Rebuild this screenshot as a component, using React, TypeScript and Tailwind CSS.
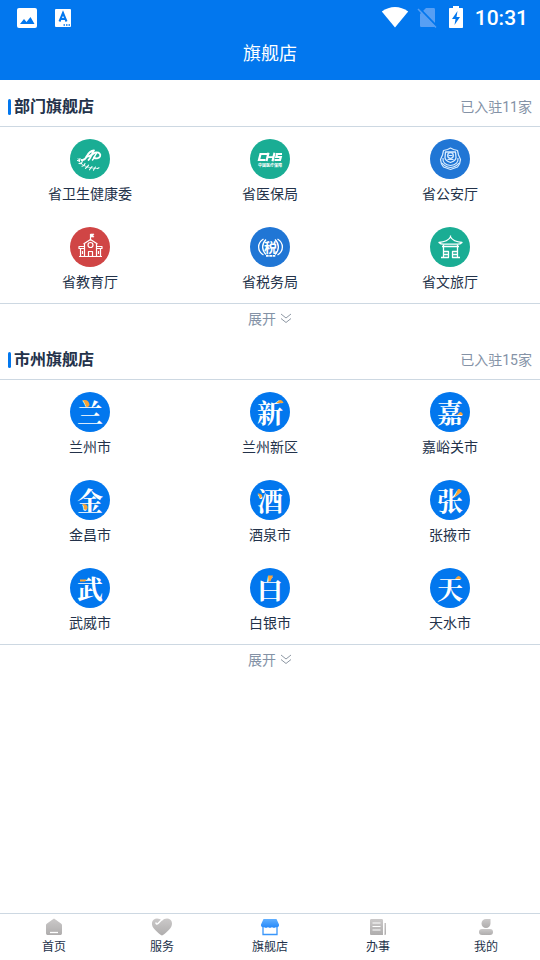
import { ReactNode } from "react";

type Department = { name: string; color: string; emblem: ReactNode };
type City = { name: string; glyph: string; accent: string };

const HealthEmblem = () => (
  <svg viewBox="0 0 40 40" className="size-10" fill="none" stroke="#fff" strokeLinecap="round" strokeLinejoin="round">
    <path d="M11.500 21c3 .5 4-1 5.500-4s3-5 7-5.500c-2 2.500-3 7.500-5.500 9.500" strokeWidth="1.800" />
    <path d="M16.500 17.500c5 .5 5.500-3.500 9.500-4 3.500-.3 5 2 4 4-1.200 2.200-4.500 2.500-6 1" strokeWidth="1.800" />
    <path d="M26.500 14.500c-1.800 1.500-2 4.500-4 6.500" strokeWidth="1.500" />
    <path d="M8 19.500c1.500 5.500 7 9.500 19.500 10" strokeWidth="0.700" />
    <path
      d="M7.500 21.500l2 .8M9 24.500l2.300.2M12 27.200l2-.7M15.500 29.300l1.500-1.200M19.500 30.800l1-1.500M23.500 31.300l.7-1.500M10 19.500l-.5 2M12.300 22.200l-.8 2M15 24.500l-1 1.800M18.500 26.200l-1.200 1.600M22 27.500l-1.200 1.500M25.500 28l-1.200 1.500M29 28.800l-1.500.8"
      strokeWidth="1.100"
    />
  </svg>
);

const InsuranceEmblem = () => (
  <svg viewBox="0 0 40 40" className="size-10" fill="none" stroke="#fff">
    <path d="M16.500 15h-6l-1.500 6h6.500" strokeWidth="2.200" />
    <path d="M18.500 13.800L16.500 22M24.500 13.800l-2 8.400" strokeWidth="2.200" />
    <path d="M15 15h3M18 18.200h5" strokeWidth="1.800" />
    <path d="M32 15h-5l-.7 3h4.500l-.8 3h-5.500" strokeWidth="2.200" />
    <text x="20" y="27.500" textAnchor="middle" fontSize="4" fontWeight="700" fill="#fff" stroke="none">
      中国医疗保障
    </text>
  </svg>
);

const PoliceEmblem = () => (
  <svg viewBox="0 0 40 40" className="size-10" fill="none" stroke="#d8ecff" strokeLinejoin="round">
    <path d="M20.500 9l3 1.500 4 1 1 4.500 2 4.500-1 4.500-2 3-7 2.500-7-2.500-2-3-1-4.500 2-4.500 1-4.500 4-1z" strokeWidth="1.200" />
    <path d="M15.500 13h10l.5 5.500c0 2.500-2.500 4-5.500 5-3-1-5.500-2.500-5.500-5z" strokeWidth="1.300" />
    <circle cx="20.500" cy="16.500" r="2.800" strokeWidth="1.300" />
    <path d="M18.500 16.500h4M17.500 20.500h6M13 19c-.5 4 2 7 7.500 7.500 5.500-.5 8-3.500 7.500-7.500M12 24c2 3 4 4 8.500 4.500 4.500-.5 6.500-1.500 8.500-4.500" strokeWidth="1.200" />
  </svg>
);

const SchoolEmblem = () => (
  <svg viewBox="0 0 40 40" className="size-10" fill="none" stroke="#fff" strokeWidth="1.200" strokeLinejoin="round">
    <path d="M20.500 13.500V7" />
    <path d="M20.500 7h3.500l-1 1.500 1 1.500h-3.500z" fill="#fff" strokeWidth="0.600" />
    <path d="M13.500 17l7-4.500 7 4.500M14.500 17v12.500M26.500 17v12.500M14 19.500H9v2h5M27 19.500h5v2h-5M10.500 21.500v8M30.500 21.500v8M9 29.500h23" />
    <circle cx="20.500" cy="18" r="2.500" />
    <path d="M18.500 29.500v-5h4v5M12.500 24v3M28.500 24v3" />
  </svg>
);

const TaxEmblem = () => (
  <svg viewBox="0 0 40 40" className="size-10" fill="none" stroke="#fff">
    <path d="M13.500 12c-6.500 4-6.500 12 0 16M16 12.500c-4.500 4.500-4.500 10.500 0 15M27.500 12c6.500 4 6.500 12 0 16M25 12.500c4.500 4.500 4.500 10.500 0 15" strokeWidth="1.300" />
    <path d="M16 28.800h9.500" strokeWidth="1.800" strokeDasharray="2.700 .6" />
    <text x="20.500" y="24.500" textAnchor="middle" fontSize="13" fontWeight="700" fill="#fff" stroke="none">
      税
    </text>
  </svg>
);

const PavilionEmblem = () => (
  <svg viewBox="0 0 40 40" className="size-10" fill="none" stroke="#fff" strokeWidth="1.300" strokeLinejoin="round">
    <path d="M20.500 8.500v2M20.500 10c-2 3.500-6.500 5-11.500 5.500 1.500 1.500 3 1.700 4.500 1.700h14c1.500 0 3-.2 4.500-1.700-5-.5-9.500-2-11.500-5.500z" />
    <path d="M12 19.500h17M13.500 17.500v13M27.500 17.500v13M11 30.500h7.500v-6h-5M30 30.500h-7.500v-6h5M14 27.500h4.500M22.500 27.500h4.500" />
  </svg>
);

const departments: Department[] = [
  { name: "省卫生健康委", color: "bg-[#1aad94]", emblem: <HealthEmblem /> },
  { name: "省医保局", color: "bg-[#1aad94]", emblem: <InsuranceEmblem /> },
  { name: "省公安厅", color: "bg-[#2076d5]", emblem: <PoliceEmblem /> },
  { name: "省教育厅", color: "bg-[#d04545]", emblem: <SchoolEmblem /> },
  { name: "省税务局", color: "bg-[#2076d5]", emblem: <TaxEmblem /> },
  { name: "省文旅厅", color: "bg-[#1aad94]", emblem: <PavilionEmblem /> },
];

// accent is the orange brush stroke laid over each city's character
const cities: City[] = [
  { name: "兰州市", glyph: "兰", accent: "M12.500 8.500c4-1.500 6.500 1 7 4 0 1.500-1 2.500-2.500 2.500-2-.5-1-3.500-4.500-6.500z" },
  { name: "兰州新区", glyph: "新", accent: "M26 11l4-3c1.500 0 3 1 3.500 3z" },
  { name: "嘉峪关市", glyph: "嘉", accent: "M27 23l3-3c1.500 0 2.500 1 3 3z" },
  { name: "金昌市", glyph: "金", accent: "M12 24c3.500-.5 6 1 5.500 4-.5 2-2.500 2.500-3.500 1-.5-2 .5-2.500-2-5z" },
  { name: "酒泉市", glyph: "酒", accent: "M7.500 13.500c3 0 5 1 4.500 3-.5 1.500-2 2-2.500 1-.5-1.500 0-2.500-2-4z" },
  { name: "张掖市", glyph: "张", accent: "M24 18l4-9h1.500l2.500 2z" },
  { name: "武威市", glyph: "武", accent: "M10 11.500h6.500l-1.500 2h-5z" },
  { name: "白银市", glyph: "白", accent: "M18 7.500h5c-.5 2-2 3.500-2.500 6h-2z" },
  { name: "天水市", glyph: "天", accent: "M25 11l3-3c1.500 0 3 1 3.500 3z" },
];

const SectionHeader = ({ title, count }: { title: string; count: number }) => (
  <div className="flex items-center justify-between border-b border-[#cdd8e2] px-2 pt-[14px] pb-[6px]">
    <h2 className="flex items-center gap-[3px] text-base leading-[26px] font-bold">
      <span className="h-4 w-[3px] rounded-full bg-[#0277ee]" />
      {title}
    </h2>
    <span className="text-sm leading-[26px] text-[#8492a6]">已入驻{count}家</span>
  </div>
);

const Store = ({ name, children }: { name: string; children: ReactNode }) => (
  <a href="#" className="flex h-[88px] flex-col items-center gap-1 pt-3">
    {children}
    <span className="text-sm leading-[22px]">{name}</span>
  </a>
);

const ExpandButton = () => (
  <button className="flex h-[30px] w-full items-center justify-center gap-1 border-t border-[#cdd8e2] pt-px text-sm text-[#8492a6]">
    展开
    <svg viewBox="0 0 12 12" className="size-3" fill="none" stroke="#8e98a4">
      <path d="M1 1l5 4 5-4M1 5.500l5 4 5-4" />
    </svg>
  </button>
);

const HomeIcon = () => (
  <svg viewBox="0 0 20 20" className="size-5" fill="url(#tabGray)">
    <path d="M10 1.500l7 5c.7.500 1 1 1 2V16c0 1.500-.7 2-2 2H4c-1.300 0-2-.5-2-2V8.500c0-1 .3-1.500 1-2z" />
    <path d="M6 15.500h8" stroke="#fff" strokeWidth="1.300" />
  </svg>
);

const HeartIcon = () => (
  <svg viewBox="0 0 20 20" className="size-5 overflow-visible" fill="url(#tabGray)">
    <path d="M10 18.500c-1 0-6-4.500-8.500-7.500C-1.500 7 0 1.500 5 1.500c2 0 3.500.8 5 2.300 1.500-1.500 3-2.300 5-2.300 5 0 6.500 5.500 3.500 9.500-2.500 3-7.500 7.500-8.500 7.500z" />
    <path d="M10 2.500L6 6.500C5 7.500 4 7 4 6" stroke="#fff" strokeWidth="1.500" fill="none" strokeLinecap="round" />
  </svg>
);

const ShopIcon = () => (
  <svg viewBox="0 0 20 20" className="size-5">
    <path d="M3 9.500v8h14v-8" fill="#fff" stroke="#3996fb" strokeWidth="1.300" />
    <path d="M3.500 2h13l2.500 5.500c.5 2-1.500 3.500-3 2.500-1.300 1.300-3 1-4 0-1.300 1.300-3 1-4 0-1.300 1.300-3 1-4 0-1.500 1-3.500-.5-3-2.500z" fill="url(#tabBlue)" />
  </svg>
);

const NewsIcon = () => (
  <svg viewBox="0 0 20 20" className="size-5" fill="url(#tabGray)">
    <path d="M3.500 2H13.500c1 0 1.500.5 1.500 1.500V18h-11.500C2.500 18 2 17.500 2 16.500v-13C2 2.500 2.500 2 3.500 2zM16.500 6H18v10.500c0 1-.5 1.500-1.500 1.500z" />
    <path d="M4.500 6h8M4.500 9.500h8M4.500 13h8" stroke="#fff" strokeWidth="1.200" />
  </svg>
);

const UserIcon = () => (
  <svg viewBox="0 0 20 20" className="size-5" fill="url(#tabGray)">
    <path d="M10 2h4.500v4.500A4.500 4.500 0 1 1 10 2z" />
    <rect x="3" y="12" width="14" height="6" rx="3" />
  </svg>
);

const tabs = [
  { label: "首页", icon: <HomeIcon /> },
  { label: "服务", icon: <HeartIcon /> },
  { label: "旗舰店", icon: <ShopIcon /> },
  { label: "办事", icon: <NewsIcon /> },
  { label: "我的", icon: <UserIcon /> },
];

const StatusBar = () => (
  <div className="flex h-9 items-center justify-between pr-3 pl-4">
    <div className="flex items-center gap-4">
      <svg viewBox="0 0 22 22" className="size-[22px]">
        <rect x="1" y="1" width="20" height="20" rx="2" fill="#fff" />
        <path d="M4 17l4-5 2.500 3 4-5 4 7z" fill="#0277ee" />
      </svg>
      <svg viewBox="0 0 18 20" className="h-5 w-[18px]">
        <rect x="1" y="1" width="16" height="18" rx="1" fill="#fff" />
        <path d="M5.500 13.500L9 5l3.500 8.500M6.500 11h5" stroke="#0277ee" strokeWidth="2" fill="none" />
        <path d="M9.500 17H16" stroke="#0277ee" strokeWidth="1.500" strokeDasharray="1.500 1" />
      </svg>
    </div>
    <div className="flex items-center">
      <svg viewBox="0 0 28 24" className="h-6 w-7" fill="#fff">
        <path d="M14 21.500L.8 5.500c8-6 18.400-6 26.400 0z" />
      </svg>
      <svg viewBox="0 0 20 24" className="ml-2 h-6 w-5">
        <path d="M9 2h7.500c1 0 1.500.5 1.500 1.500v16c0 1-.5 1.500-1.500 1.500h-12C3.500 21 3 20.500 3 19.500V8z" fill="#579ff4" />
        <path d="M2 2l18 18.500" stroke="#0277ee" strokeWidth="2" />
        <path d="M1 3l18 18.500" stroke="#579ff4" strokeWidth="1.500" />
      </svg>
      <svg viewBox="0 0 14 24" className="ml-3 h-6 w-[14px]">
        <path d="M4 0h6v2h3c.6 0 1 .4 1 1v18c0 .6-.4 1-1 1H1c-.6 0-1-.4-1-1V3c0-.6.4-1 1-1h3z" fill="#fff" />
        <path d="M8.500 5L3 13h3.500l-1 6L11 11H7.500z" fill="#0277ee" />
      </svg>
      <span className="ml-3 text-[21px] leading-9 font-medium">10:31</span>
    </div>
  </div>
);

export default function App() {
  return (
    <div className="flex min-h-screen flex-col bg-white font-[Roboto,'Noto_Sans_CJK_SC',sans-serif] text-[#23324a]">
      <svg className="absolute size-0" aria-hidden="true">
        <defs>
          <linearGradient id="tabGray" x1="0" y1="0" x2="0" y2="1">
            <stop offset="0" stopColor="#cbc9c9" />
            <stop offset="1" stopColor="#afadad" />
          </linearGradient>
          <linearGradient id="tabBlue" x1="0" y1="0" x2="0" y2="1">
            <stop offset="0" stopColor="#62b0ff" />
            <stop offset="1" stopColor="#2488fa" />
          </linearGradient>
        </defs>
      </svg>

      <header className="bg-[#0277ee] pb-2 text-white">
        <StatusBar />
        <h1 className="text-center text-lg leading-9">旗舰店</h1>
      </header>

      <main className="flex-1">
        <section>
          <SectionHeader title="部门旗舰店" count={11} />
          <div className="grid grid-cols-3">
            {departments.map(({ name, color, emblem }) => (
              <Store key={name} name={name}>
                <span className={`size-10 rounded-full ${color}`}>{emblem}</span>
              </Store>
            ))}
          </div>
          <ExpandButton />
        </section>

        <section>
          <SectionHeader title="市州旗舰店" count={15} />
          <div className="grid grid-cols-3">
            {cities.map(({ name, glyph, accent }) => (
              <Store key={name} name={name}>
                <span className="relative flex size-10 items-center justify-center rounded-full bg-[#0277ee] font-['Noto_Serif_CJK_SC','Noto_Sans_CJK_SC',serif] text-[26px] leading-10 font-bold text-white">
                  {glyph}
                  <svg viewBox="0 0 40 40" className="absolute inset-0 size-10" fill="#f9a436">
                    <path d={accent} />
                  </svg>
                </span>
              </Store>
            ))}
          </div>
          <ExpandButton />
        </section>
      </main>

      <nav className="sticky bottom-0 grid grid-cols-5 border-t border-[#cdd8e2] bg-white pt-[3px] pb-[3px]">
        {tabs.map(({ label, icon }) => (
          <a key={label} href="#" className="flex flex-col items-center text-xs leading-5">
            {icon}
            {label}
          </a>
        ))}
      </nav>
    </div>
  );
}
